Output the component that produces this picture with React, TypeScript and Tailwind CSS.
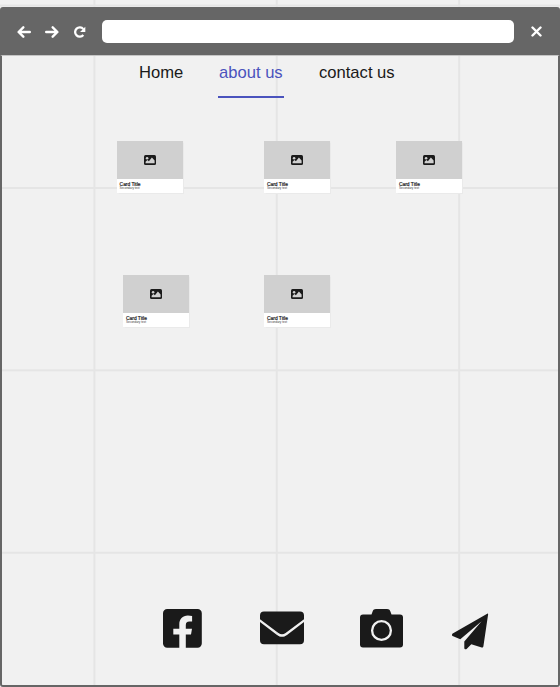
import React from "react";

const gridLines =
  "bg-[linear-gradient(to_right,#e5e5e5_2px,transparent_2px),linear-gradient(to_bottom,#e5e5e5_2px,transparent_2px)] bg-[size:182.4px_182.4px] bg-[position:93.4px_4.6px]";

function PictureIcon() {
  return (
    <svg viewBox="0 0 12 10" className="h-[10px] w-[12px]">
      <rect width="12" height="10" rx="1.5" fill="#1a1a1a" />
      <circle cx="3.1" cy="3.2" r="1.3" fill="#d0d0d0" />
      <path d="M1.6 8.3V6.800l1.800-1.800 1.500 1.200 3-3.600 2.700 2.900v2.800z" fill="#d0d0d0" />
    </svg>
  );
}

function Card({ className = "" }: { className?: string }) {
  return (
    <article className={`h-[52px] w-[66px] shrink-0 bg-white shadow-[0_0_1px_0.5px_#eaeaea] ${className}`}>
      <div className="flex h-[38px] items-center justify-center bg-[#d0d0d0]">
        <PictureIcon />
      </div>
      <div className="pl-[3px] pt-[3px] text-[#1a1a1a]">
        <h2 className="text-[4.9px] font-medium leading-[5px] [-webkit-text-stroke:0.2px_#1a1a1a]">Card Title</h2>
        <p className="text-[3px] leading-[3px] text-[#444]">Secondary text</p>
      </div>
    </article>
  );
}

function BrowserBar() {
  return (
    <header className="flex h-12 shrink-0 items-center rounded-t-[3px] bg-[#666] pl-[17px] pt-px">
      <svg viewBox="0 0 14 12" className="h-3 w-[14px]" fill="none" stroke="#fff" strokeWidth="2.4" strokeLinecap="round" strokeLinejoin="round">
        <path d="M12.800 6H2M6.300 1.300L1.600 6l4.700 4.700" />
      </svg>
      <svg viewBox="0 0 14 12" className="ml-[14px] h-3 w-[14px]" fill="none" stroke="#fff" strokeWidth="2.4" strokeLinecap="round" strokeLinejoin="round">
        <path d="M1.200 6H12M7.700 1.300L12.400 6l-4.700 4.700" />
      </svg>
      <svg viewBox="0 0 13 12" className="ml-[14px] h-3 w-[13px]" fill="none" stroke="#fff" strokeWidth="2.300">
        <path d="M10.300 8.900A4.600 4.600 0 1 1 10.300 3.100" />
        <path d="M12.300.8v5.200H7.100z" fill="#fff" stroke="none" />
      </svg>
      <div className="ml-[16px] h-[23px] w-[412px] rounded-[5px] bg-white" />
      <svg viewBox="0 0 11 11" className="ml-[17px] h-[11px] w-[11px]" stroke="#fff" strokeWidth="2.400" strokeLinecap="round">
        <path d="M1.500 1.500l8 8M9.500 1.500l-8 8" />
      </svg>
    </header>
  );
}

function SocialIcons() {
  return (
    <footer className="mt-auto mb-[34px] flex h-[42px] items-start pl-[161px] text-[#1a1a1a]">
      <svg viewBox="0 0 39 39" className="h-[39px] w-[39px]" fill="currentColor">
        <path d="M4.200 0h30.400a4.200 4.200 0 0 1 4.200 4.200v30.400a4.200 4.200 0 0 1-4.200 4.200H22.800V25.600h5.200l1-5.900h-6.200v-3.500c0-2.200 1-3.600 3.700-3.600h2.600V7.100c-1.200-.3-2.700-.5-4.200-.5-5.400 0-8.600 3.500-8.600 8.700v4.400h-6v5.900h6v13.200H4.200A4.200 4.200 0 0 1 0 34.600V4.200A4.200 4.200 0 0 1 4.200 0z" />
      </svg>
      <svg viewBox="0 0 44 34" className="ml-[58px] mt-[2px] h-[34px] w-[44px]" fill="currentColor">
        <path d="M4 .4h36a4 4 0 0 1 4 4v3.800L25.600 22c-2.400 1.800-4.800 1.800-7.200 0L0 8.200V4.400a4 4 0 0 1 4-4z" />
        <path d="M0 11l17 12.900c3.300 2.500 6.700 2.500 10 0L44 11v18.300a4 4 0 0 1-4 4H4a4 4 0 0 1-4-4z" />
      </svg>
      <svg viewBox="0 0 43 39" className="ml-[56px] h-[39px] w-[43px]" fill="currentColor">
        <path d="M3 5.500h8.500l1.200-3.200C13.200.9 14.300.1 16 .1h11c1.700 0 2.800.8 3.300 2.200l1.200 3.200H40a3 3 0 0 1 3 3v27.100a3 3 0 0 1-3 3H3a3 3 0 0 1-3-3V8.500a3 3 0 0 1 3-3z" />
        <circle cx="21.500" cy="21.500" r="9.400" fill="none" stroke="#f1f1f1" strokeWidth="2.300" />
      </svg>
      <svg viewBox="0 0 37 37" className="ml-[49px] mt-[4px] h-[37px] w-[37px]" fill="currentColor">
        <path d="M35.200.7c.6-.3 1 0 .9.7L31.400 33.200c-.2 1-.8 1.500-1.700 1.200L19.300 31.200l-4.700 4.700c-.9.8-2.300.4-2.300-1V28.600L29.600 8.300 8.300 26.200.6 23c-.8-.5-.8-1.800.1-2.400z" />
      </svg>
    </footer>
  );
}

export default function App() {
  return (
    <div className={`flex h-[687px] w-[560px] flex-col bg-[#f1f1f1] pt-[7px] font-['Liberation_Sans',Arial,sans-serif] ${gridLines}`}>
      <BrowserBar />
      <main className="flex flex-1 flex-col rounded-b-[3px] border-2 border-t border-[#666] border-t-[#c5c5c5]">
        <nav className="flex h-[42px] items-start pl-[137px] pt-[7px] text-[16.600px] leading-5 text-[#1a1a1a]">
          <a className="w-[79px]">Home</a>
          <a className="h-[35px] w-[66px] whitespace-nowrap border-b-2 border-[#4a53bd] pl-px text-[#4a53bd]">about us</a>
          <a className="ml-[35px] whitespace-nowrap">contact us</a>
        </nav>
        <section className="mt-[43px] flex pl-[114.600px]">
          <Card />
          <Card className="ml-[81.400px]" />
          <Card className="ml-[66px]" />
        </section>
        <section className="mt-[82.400px] flex pl-[121px]">
          <Card />
          <Card className="ml-[75px]" />
        </section>
        <SocialIcons />
      </main>
    </div>
  );
}
